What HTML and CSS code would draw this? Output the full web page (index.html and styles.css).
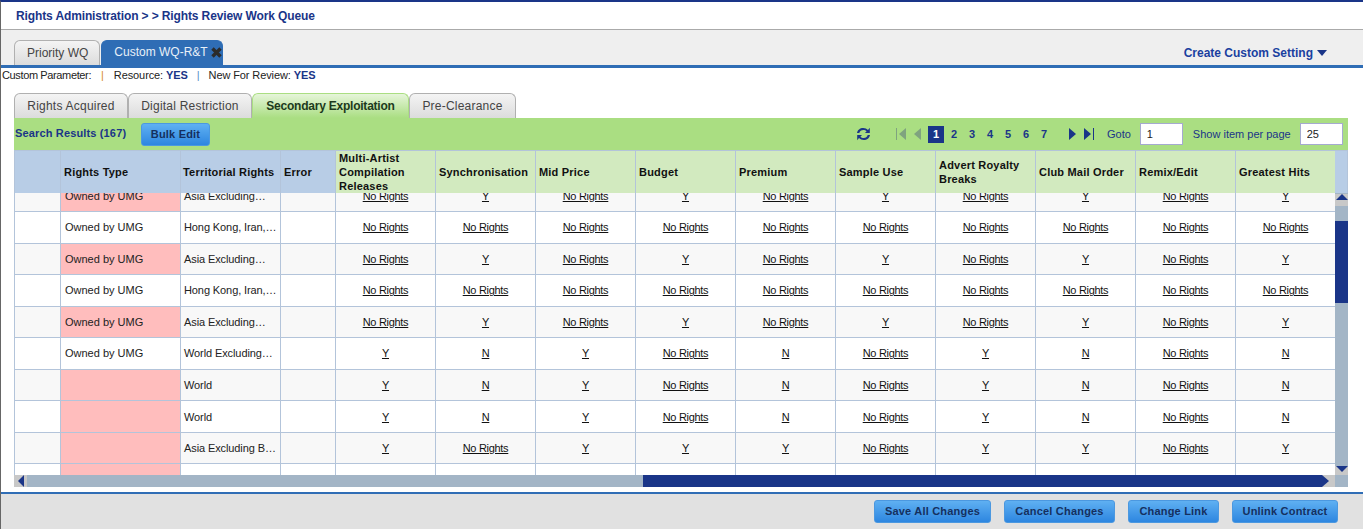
FILE: index.html
```html
<!DOCTYPE html>
<html lang="en">
<head>
    <meta charset="UTF-8">
    <title>Rights Review Work Queue</title>
    <link rel="stylesheet" href="styles.css">
</head>
<body>
    <div class="page">
        <div class="title">Rights Administration &gt; &gt; Rights Review Work Queue</div>

        <div class="wq-tabs">
            <div class="tab tab-priority">Priority WQ</div>
            <div class="tab tab-blue">Custom WQ-R&amp;T
                <svg class="tab-close" width="11" height="11" viewBox="0 0 11 11"><path d="M1.500 1.500l8 8M9.500 1.500l-8 8" stroke="#2b2b2b" stroke-width="3.400"/></svg>
            </div>
            <div class="create-link">Create Custom Setting
                <svg width="10" height="6" viewBox="0 0 10 6"><path d="M0 0h10L5 6z" fill="#1a3588"/></svg>
            </div>
        </div>

        <div class="params">
            <span class="params-label">Custom Parameter:</span>
            <span class="sep-orange">|</span>
            <span>Resource: <b>YES</b></span>
            <span class="sep-blue">|</span>
            <span>New For Review: <b>YES</b></span>
        </div>

        <div class="main">
            <div class="sub-tabs">
                <div class="tab sub-tab t-acquired">Rights Acquired</div>
                <div class="tab sub-tab t-digital">Digital Restriction</div>
                <div class="tab sub-tab tab-green t-secondary">Secondary Exploitation</div>
                <div class="tab sub-tab t-clearance">Pre-Clearance</div>
            </div>

            <div class="toolbar">
                <span class="results">Search Results (167)</span>
                <button class="btn btn-bulk">Bulk Edit</button>
                <svg class="refresh" width="15" height="14" viewBox="0 0 15 14">
                    <path d="M1 6C1.500 3 4 1 7.200 1c2 0 3.600.8 4.800 2L13.800.8V6H9l1.600-1.700C9.800 3.500 8.700 3 7.300 3 5.300 3 3.800 4.200 3.300 6z" fill="#1a3588"/>
                    <path d="M14 8c-.5 3-3 5-6.200 5-2 0-3.600-.8-4.800-2L1.200 13.200V8H6L4.400 9.700C5.200 10.500 6.300 11 7.700 11c2 0 3.500-1.200 4-3z" fill="#1a3588"/>
                </svg>
                <div class="pager">
                    <svg class="pg-first" width="10" height="12" viewBox="0 0 10 12"><path d="M0 0h1v12H0zM10 0v12L3 6z" fill="#7fa37f"/></svg>
                    <svg class="pg-prev" width="9" height="12" viewBox="0 0 9 12"><path d="M8 0v12L1 6z" fill="#7fa37f"/></svg>
                    <span class="pg pg-on">1</span>
                    <span class="pg">2</span>
                    <span class="pg">3</span>
                    <span class="pg">4</span>
                    <span class="pg">5</span>
                    <span class="pg">6</span>
                    <span class="pg">7</span>
                    <svg class="pg-next" width="10" height="12" viewBox="0 0 10 12"><path d="M1 0v12l7-6z" fill="#1a3588"/></svg>
                    <svg class="pg-last" width="11" height="12" viewBox="0 0 11 12"><path d="M0 0v12l7-6zM9 0h1v12H9z" fill="#1a3588"/></svg>
                </div>
                <span class="goto">Goto</span>
                <input class="box box-goto" type="text" value="1">
                <span class="per-page">Show item per page</span>
                <input class="box box-size" type="text" value="25">
            </div>

            <div class="grid">
                <table class="head">
                    <colgroup>
                        <col class="c-check"><col class="c-type"><col class="c-terr"><col class="c-err">
                        <col class="c-data"><col class="c-data"><col class="c-data"><col class="c-data"><col class="c-data">
                        <col class="c-data"><col class="c-data"><col class="c-data"><col class="c-data"><col class="c-data">
                    </colgroup>
                    <tr>
                        <th class="th-blue"></th>
                        <th class="th-blue">Rights Type</th>
                        <th class="th-blue th-tight">Territorial Rights</th>
                        <th class="th-blue">Error</th>
                        <th>Multi-Artist Compilation Releases</th>
                        <th>Synchronisation</th>
                        <th>Mid Price</th>
                        <th>Budget</th>
                        <th>Premium</th>
                        <th>Sample Use</th>
                        <th>Advert Royalty Breaks</th>
                        <th>Club Mail Order</th>
                        <th>Remix/Edit</th>
                        <th>Greatest Hits</th>
                    </tr>
                </table>
                <div class="head-corner"></div>

                <div class="rows">
                    <table class="body">
                        <colgroup>
                            <col class="c-check"><col class="c-type"><col class="c-terr"><col class="c-err">
                            <col class="c-data"><col class="c-data"><col class="c-data"><col class="c-data"><col class="c-data">
                            <col class="c-data"><col class="c-data"><col class="c-data"><col class="c-data"><col class="c-data">
                        </colgroup>
                        <tr class="alt">
                            <td></td><td class="pink">Owned by UMG</td><td class="terr">Asia Excluding…</td><td></td>
                            <td><a>No Rights</a></td><td><a>Y</a></td><td><a>No Rights</a></td><td><a>Y</a></td><td><a>No Rights</a></td>
                            <td><a>Y</a></td><td><a>No Rights</a></td><td><a>Y</a></td><td><a>No Rights</a></td><td><a>Y</a></td>
                        </tr>
                        <tr>
                            <td></td><td class="type">Owned by UMG</td><td class="terr">Hong Kong, Iran,…</td><td></td>
                            <td><a>No Rights</a></td><td><a>No Rights</a></td><td><a>No Rights</a></td><td><a>No Rights</a></td><td><a>No Rights</a></td>
                            <td><a>No Rights</a></td><td><a>No Rights</a></td><td><a>No Rights</a></td><td><a>No Rights</a></td><td><a>No Rights</a></td>
                        </tr>
                        <tr class="alt">
                            <td></td><td class="pink">Owned by UMG</td><td class="terr">Asia Excluding…</td><td></td>
                            <td><a>No Rights</a></td><td><a>Y</a></td><td><a>No Rights</a></td><td><a>Y</a></td><td><a>No Rights</a></td>
                            <td><a>Y</a></td><td><a>No Rights</a></td><td><a>Y</a></td><td><a>No Rights</a></td><td><a>Y</a></td>
                        </tr>
                        <tr>
                            <td></td><td class="type">Owned by UMG</td><td class="terr">Hong Kong, Iran,…</td><td></td>
                            <td><a>No Rights</a></td><td><a>No Rights</a></td><td><a>No Rights</a></td><td><a>No Rights</a></td><td><a>No Rights</a></td>
                            <td><a>No Rights</a></td><td><a>No Rights</a></td><td><a>No Rights</a></td><td><a>No Rights</a></td><td><a>No Rights</a></td>
                        </tr>
                        <tr class="alt">
                            <td></td><td class="pink">Owned by UMG</td><td class="terr">Asia Excluding…</td><td></td>
                            <td><a>No Rights</a></td><td><a>Y</a></td><td><a>No Rights</a></td><td><a>Y</a></td><td><a>No Rights</a></td>
                            <td><a>Y</a></td><td><a>No Rights</a></td><td><a>Y</a></td><td><a>No Rights</a></td><td><a>Y</a></td>
                        </tr>
                        <tr>
                            <td></td><td class="type">Owned by UMG</td><td class="terr">World Excluding…</td><td></td>
                            <td><a>Y</a></td><td><a>N</a></td><td><a>Y</a></td><td><a>No Rights</a></td><td><a>N</a></td>
                            <td><a>No Rights</a></td><td><a>Y</a></td><td><a>N</a></td><td><a>No Rights</a></td><td><a>N</a></td>
                        </tr>
                        <tr class="alt">
                            <td></td><td class="pink"></td><td class="terr">World</td><td></td>
                            <td><a>Y</a></td><td><a>N</a></td><td><a>Y</a></td><td><a>No Rights</a></td><td><a>N</a></td>
                            <td><a>No Rights</a></td><td><a>Y</a></td><td><a>N</a></td><td><a>No Rights</a></td><td><a>N</a></td>
                        </tr>
                        <tr>
                            <td></td><td class="pink"></td><td class="terr">World</td><td></td>
                            <td><a>Y</a></td><td><a>N</a></td><td><a>Y</a></td><td><a>No Rights</a></td><td><a>N</a></td>
                            <td><a>No Rights</a></td><td><a>Y</a></td><td><a>N</a></td><td><a>No Rights</a></td><td><a>N</a></td>
                        </tr>
                        <tr class="alt">
                            <td></td><td class="pink"></td><td class="terr">Asia Excluding B…</td><td></td>
                            <td><a>Y</a></td><td><a>No Rights</a></td><td><a>Y</a></td><td><a>Y</a></td><td><a>Y</a></td>
                            <td><a>No Rights</a></td><td><a>Y</a></td><td><a>Y</a></td><td><a>No Rights</a></td><td><a>Y</a></td>
                        </tr>
                        <tr>
                            <td></td><td class="pink"></td><td></td><td></td>
                            <td></td><td></td><td></td><td></td><td></td>
                            <td></td><td></td><td></td><td></td><td></td>
                        </tr>
                    </table>
                </div>

                <!-- vertical scrollbar -->
                <div class="vbar">
                    <div class="sb-btn sb-up"><svg width="12" height="6" viewBox="0 0 12 6"><path d="M6 0l6 6H0z" fill="#1a3588"/></svg></div>
                    <div class="vbar-gap"></div>
                    <div class="vbar-thumb"></div>
                    <div class="vbar-rest"></div>
                    <div class="sb-btn sb-down"><svg width="12" height="6" viewBox="0 0 12 6"><path d="M0 0h12L6 6z" fill="#1a3588"/></svg></div>
                </div>

                <!-- horizontal scrollbar -->
                <div class="hbar">
                    <div class="sb-btn sb-left"><svg width="6" height="12" viewBox="0 0 6 12"><path d="M6 0v12L0 6z" fill="#1a3588"/></svg></div>
                    <div class="hbar-gap"></div>
                    <div class="hbar-thumb"></div>
                    <div class="sb-btn sb-right"><svg width="7" height="12" viewBox="0 0 7 12"><path d="M0 0v12l7-6z" fill="#1a3588"/></svg></div>
                </div>
                <div class="bar-corner"></div>
            </div>
        </div>

        <div class="footer">
            <button class="btn btn-save">Save All Changes</button>
            <button class="btn btn-cancel">Cancel Changes</button>
            <button class="btn btn-link">Change Link</button>
            <button class="btn btn-unlink">Unlink Contract</button>
        </div>
    </div>
</body>
</html>
```

FILE: styles.css
```css
body {
    margin: 0;
    padding: 0;
    font-family: "Liberation Sans", Arial, sans-serif;
    font-size: 11px;
    color: #222;
    background-color: #fff;
}

.page {
    height: 527px;
    width: 1362px;
    border-top: 2px solid #1a3588;
    border-left: 1px solid #666;
    display: flex;
    flex-direction: column;
}

.title {
    height: 26px;
    padding: 1px 0 0 15px;
    line-height: 27px;
    font-size: 12px;
    font-weight: bold;
    letter-spacing: -0.12px;
    color: #1a3588;
    border-bottom: 1px solid #aaa;
}

/* Tabs */
.wq-tabs {
    height: 35px;
    padding-left: 13px;
    background-color: #efefef;
    border-bottom: 3px solid #2f6db5;
    display: flex;
    align-items: flex-end;
    gap: 1px;
}

.sub-tabs {
    display: flex;
    align-items: flex-end;
    height: 25px;
}

.tab {
    height: 24px;
    line-height: 24px;
    padding: 0 12px;
    font-size: 12px;
    color: #444;
    background: linear-gradient(#f4f4f4, #dcdcdc);
    border: 1px solid #b0b0b0;
    border-bottom: none;
    border-radius: 6px 6px 0 0;
}

.tab-priority {
    padding-right: 11px;
}

.tab-blue {
    background: #2f6db5;
    border-color: #2f6db5;
    color: #e8f0f8;
    padding-right: 0;
    width: 108px;
    height: 22px;
    padding-bottom: 2px;
    display: flex;
    align-items: center;
    white-space: nowrap;
}

.tab-close {
    margin-left: 3px;
}

.sub-tab {
    box-sizing: border-box;
    height: 25px;
    padding: 0;
    text-align: center;
    letter-spacing: 0.22px;
}

.t-acquired { width: 114px; }
.t-digital { width: 124px; }
.t-secondary { width: 157px; }
.t-clearance { width: 107px; }

.tab-green {
    background: linear-gradient(#e6f5da, #aade82);
    border-color: #aade82;
    font-weight: bold;
    color: #1d3a1d;
    letter-spacing: -0.23px;
}

.create-link {
    margin-left: auto;
    margin-right: 36px;
    height: 24px;
    font-size: 12px;
    font-weight: bold;
    color: #1a3fa0;
    display: flex;
    align-items: center;
    gap: 4px;
}

.params {
    height: 25px;
    padding: 1px 0 0 1px;
    box-sizing: border-box;
    display: flex;
    gap: 10px;
    font-size: 11px;
    letter-spacing: -0.1px;
    line-height: 13px;
    color: #222;
}

.params-label {
    letter-spacing: -0.37px;
}

.params b {
    color: #1a3588;
}

.sep-orange {
    color: #d9872b;
}

.sep-blue {
    color: #5b8fc7;
    margin: 0 -1px;
}

.main {
    padding-left: 13px;
    width: 1334px;
}

/* Toolbar */
.toolbar {
    height: 32px;
    background-color: #aade82;
    display: flex;
    align-items: center;
    font-size: 11px;
    color: #1a3588;
}

.results {
    width: 126px;
    padding-left: 1px;
    margin-top: -3px;
    font-weight: bold;
    letter-spacing: 0.15px;
    white-space: nowrap;
    box-sizing: border-box;
}

.btn {
    height: 23px;
    padding: 0 0 1px;
    font-family: inherit;
    font-size: 11px;
    font-weight: bold;
    letter-spacing: 0.2px;
    color: #15305f;
    background: linear-gradient(#5fb0f2, #2d86e0);
    border: 1px solid #4b98e0;
    border-radius: 3px;
}

.btn-bulk {
    width: 69px;
    margin: 1px 0 0 1px;
}

.refresh {
    margin: 0 0 1px 646px;
}

.pager {
    display: flex;
    align-items: center;
    gap: 2px;
    margin-left: 25px;
    font-weight: bold;
}

.pg-prev {
    margin: 0 4px 0 5px;
}

.pg-next {
    margin: 0 4px 0 14px;
}

.pg {
    width: 16px;
    height: 17px;
    line-height: 17px;
    text-align: center;
}

.pg-on {
    background-color: #1a3588;
    color: #fff;
}

.goto {
    margin-left: 12px;
}

.per-page {
    white-space: nowrap;
}

.box {
    width: 43px;
    height: 22px;
    box-sizing: border-box;
    padding: 0 0 0 6px;
    border: 1px solid #a5aad0;
    background-color: #fff;
    font-family: inherit;
    font-size: 11px;
    color: #222;
}

.box-goto {
    margin: 0 10px 0 9px;
}

.box-size {
    margin-left: 9px;
}

/* Grid */
.grid {
    display: grid;
    grid-template-columns: 1321px 13px;
    grid-template-rows: 43px 282px 12px;
}

.head,
.body {
    width: 1322px;
    table-layout: fixed;
    border-collapse: separate;
    border-spacing: 0;
}

.c-check { width: 47px; }
.c-type { width: 120px; }
.c-terr { width: 100px; }
.c-err { width: 55px; }
.c-data { width: 100px; }

.head th {
    height: 43px;
    padding: 0 3px;
    box-sizing: border-box;
    text-align: left;
    font-size: 11px;
    letter-spacing: 0.2px;
    line-height: 14px;
    color: #111;
    background-color: #d2eabf;
    border-right: 1px solid #b3c4da;
    border-top: 1px solid #b3c4da;
    border-bottom: 1px solid #b3c4da;
}

.head th.th-blue {
    background-color: #b8cde6;
}

.head th:first-child,
.body td:first-child {
    border-left: 1px solid #b3c4da;
}

.head th.th-tight {
    padding: 0 2px;
    white-space: nowrap;
}

.head-corner {
    background-color: #b8cde6;
    border-top: 1px solid #b3c4da;
    border-right: 1px solid #b3c4da;
}

.rows {
    height: 282px;
    overflow: hidden;
}

.body {
    margin-top: -12.6px;
}

.body td {
    height: 31.55px;
    padding: 0;
    box-sizing: border-box;
    text-align: center;
    font-size: 11px;
    color: #222;
    background-color: #fff;
    border-right: 1px solid #b3c4da;
    border-bottom: 1px solid #b3c4da;
    white-space: nowrap;
}

.body .alt td {
    background-color: #f8f8f8;
}

.body td.type,
.body td.pink {
    text-align: left;
    padding-left: 4px;
}

.body td.terr {
    text-align: left;
    padding-left: 3px;
    letter-spacing: -0.1px;
}

.body td.pink,
.body .alt td.pink {
    background-color: #ffbdbd;
}

.body a {
    color: #111;
    text-decoration: underline;
    letter-spacing: -0.3px;
}

/* Scrollbars */
.vbar {
    grid-row: 2;
    grid-column: 2;
    display: flex;
    flex-direction: column;
    background-color: #a3b5c6;
}

.sb-btn {
    flex: none;
    background-color: #c8c8c8;
    display: flex;
}

.sb-up {
    height: 12px;
    margin-top: 1px;
    justify-content: center;
}

.sb-down {
    height: 9px;
    justify-content: center;
}

.sb-left {
    width: 13px;
    height: 12px;
    justify-content: center;
}

.sb-right {
    width: 13px;
    height: 12px;
}

.vbar-gap {
    height: 15px;
}

.vbar-thumb {
    height: 82px;
    background-color: #1a3588;
}

.vbar-rest {
    flex: 1;
}

.hbar {
    grid-row: 3;
    grid-column: 1;
    display: flex;
}

.hbar-gap {
    width: 616px;
    background-color: #a3b5c6;
}

.hbar-thumb {
    flex: 1;
    background-color: #1a3588;
}

.bar-corner {
    background-color: #a3b5c6;
}

/* Footer */
.footer {
    margin-top: 5px;
    height: 37px;
    box-sizing: border-box;
    padding: 6px 25px 0 0;
    background-color: #e1e1e1;
    border-top: 2px solid #2f6db5;
    display: flex;
    justify-content: flex-end;
    gap: 13px;
}

.footer .btn {
    flex: none;
}

.btn-save { width: 117px; }
.btn-cancel { width: 111px; }
.btn-link { width: 91px; }
.btn-unlink { width: 106px; }
```
